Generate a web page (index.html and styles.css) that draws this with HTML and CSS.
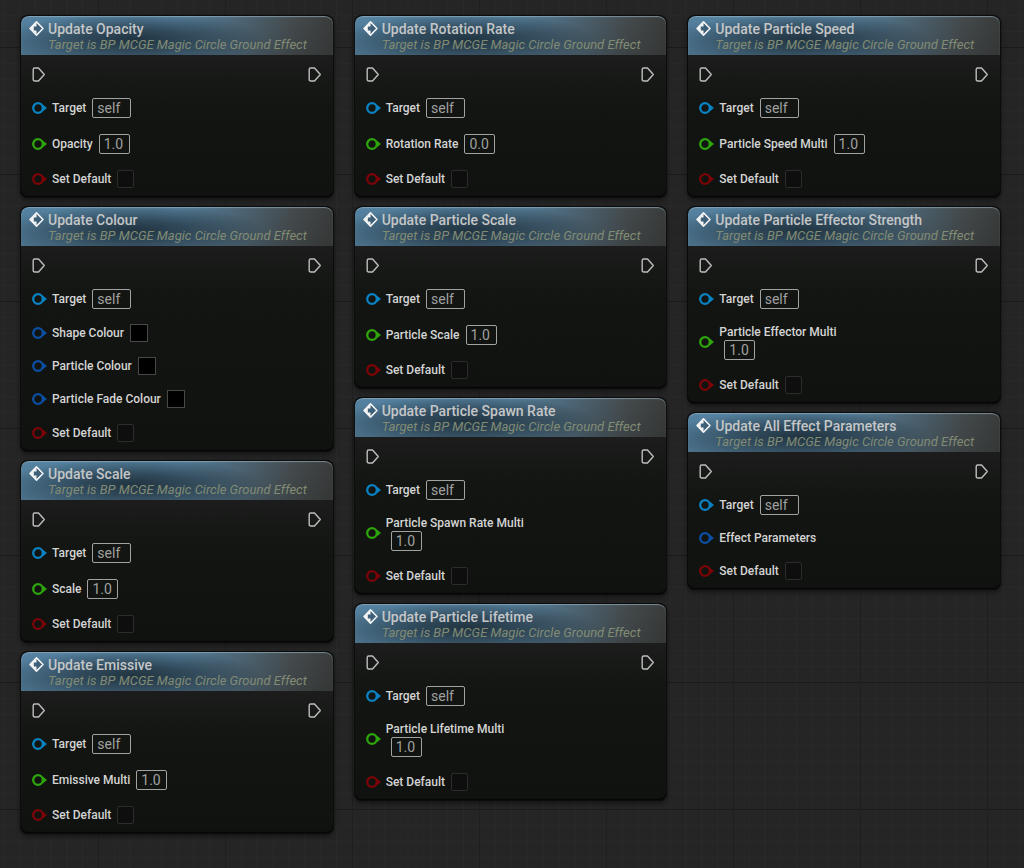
FILE: index.html
```
<!DOCTYPE html>
<html lang="en">
<head>
    <meta charset="UTF-8">
    <meta name="viewport" content="width=device-width, initial-scale=1.0">
    <title>Magic Circle Ground Effect</title>
    <link rel="stylesheet" href="styles.css">
</head>
<body>
    <main class="graph" id="graph"></main>

    <script src="nodes.js"></script>
</body>
</html>
```
FILE: styles.css
```
/* Graph background */
body {
    margin: 0;
    min-height: 100vh;
    font-family: Roboto, "Liberation Sans", sans-serif;
    background-color: #252525;
    background-image:
        linear-gradient(90deg, #1f1f1f 1px, transparent 1px),
        linear-gradient(#1b1b1b 1px, transparent 1px),
        linear-gradient(90deg, #292929 1px, transparent 1px),
        linear-gradient(#292929 1px, transparent 1px);
    background-size: 127px 127px, 127px 127px, calc(127px / 8) calc(127px / 8), calc(127px / 8) calc(127px / 8);
    background-position: 98px 47px;
}

.graph {
    display: grid;
    grid-template-columns: repeat(3, 1fr);
    gap: 20px;
    padding: 15px 23px 15px 20px;
}

.column {
    display: flex;
    flex-direction: column;
    gap: 8px;
}

/* Nodes */
.node {
    border-radius: 8px;
    background: linear-gradient(rgba(27, 28, 27, 0.95) 40px, rgba(17, 20, 17, 0.95) 90px, rgba(14, 17, 14, 0.95));
    box-shadow: inset 0 0 0 1px #0b0c0b, inset 0 -2px 1px #050605, 0 2px 5px rgba(0, 0, 0, 0.5);
}

.node-header {
    display: flex;
    gap: 4px;
    box-sizing: border-box;
    height: 40px;
    margin: 0 1px;
    padding: 5px 8px 0;
    border-top: 1px solid #0b0c0b;
    border-radius: 8px 8px 0 0;
    background:
        radial-gradient(ellipse 130px 26px at 36% 60%, rgba(22, 36, 46, 0.8), rgba(22, 36, 46, 0.55) 40%, rgba(22, 36, 46, 0)),
        linear-gradient(rgba(30, 32, 32, 0), rgba(30, 32, 32, 0.2)),
        linear-gradient(90deg, #5583a2, #557f9b 50%, #4d6676 70%, #444a4c 88%, #3a3c3b);
    box-shadow: inset 0 1px 1px rgba(160, 185, 200, 0.6);
}

.event-icon {
    flex: none;
    width: 15px;
    height: 15px;
}

.node-title {
    margin: 0;
    font-size: 14px;
    font-weight: 500;
    line-height: 16px;
    color: #c4c6c7;
}

.node-subtitle {
    margin: 0;
    font-size: 13px;
    line-height: 16px;
    font-style: italic;
    color: #818b74;
}

.node-body {
    display: flex;
    flex-direction: column;
    gap: 15px;
    padding: 12px 12px 10px;
}

/* Pins */
.exec-row {
    display: flex;
    justify-content: space-between;
    align-items: center;
    height: 15px;
}

.exec-pin {
    width: 14px;
    height: 17px;
}

.pin-row {
    display: flex;
    align-items: center;
    gap: 5px;
    height: 21px;
}

.pin-row.color { height: 18px; }
.pin-row.bool { height: 19px; }
.pin-row.struct { height: 16px; }
.pin-row.wrapped { height: 36px; }

.pin {
    flex: none;
    width: 15px;
    height: 14px;
}

.pin-row.object .pin { color: #0a82c2; }
.pin-row.float .pin { color: #2ea50c; }
.pin-row.color .pin,
.pin-row.struct .pin { color: #0b4fa3; }
.pin-row.bool .pin { color: #7c0408; }

.field {
    display: flex;
    align-items: center;
    gap: 6px;
}

.wrapped .field {
    flex-direction: column;
    align-items: flex-start;
    gap: 0;
}

.field label,
.field span {
    font-size: 12px;
    font-weight: 500;
    line-height: 16px;
    color: #d4d4d4;
}

.field input {
    box-sizing: border-box;
    margin: 0;
}

.field input[type="text"] {
    width: 31px;
    height: 20px;
    padding: 0 4px;
    border: 1px solid #a2a2a2;
    border-radius: 2px;
    background: transparent;
    font-family: inherit;
    font-size: 14px;
    color: #a0a0a0;
}

.object .field input[type="text"] {
    width: 39px;
}

.wrapped .field input[type="text"] {
    margin-left: 5px;
}

.field input[type="checkbox"] {
    appearance: none;
    width: 17px;
    height: 18px;
    border: 1px solid #2c2c2c;
    border-radius: 2px;
    background: #0e0e0e;
}

.field input[type="checkbox"]:checked {
    background: #0a86c8;
}

.field input[type="color"] {
    appearance: none;
    width: 18px;
    height: 18px;
    padding: 0;
    border: 1px solid #484848;
    background: #000;
}

.field input[type="color"]::-webkit-color-swatch-wrapper {
    padding: 0;
}

.field input[type="color"]::-webkit-color-swatch {
    border: none;
}
```
FILE: nodes.js
```
const subtitle = 'Target is BP MCGE Magic Circle Ground Effect';

// pins between Target and Set Default, [type, label, value]
const columns = [
    [
        { title: 'Update Opacity', pins: [['float', 'Opacity', '1.0']] },
        { title: 'Update Colour', pins: [['color', 'Shape Colour', '#000000'], ['color', 'Particle Colour', '#000000'], ['color', 'Particle Fade Colour', '#000000']] },
        { title: 'Update Scale', pins: [['float', 'Scale', '1.0']] },
        { title: 'Update Emissive', pins: [['float', 'Emissive Multi', '1.0']] }
    ],
    [
        { title: 'Update Rotation Rate', pins: [['float', 'Rotation Rate', '0.0']] },
        { title: 'Update Particle Scale', pins: [['float', 'Particle Scale', '1.0']] },
        { title: 'Update Particle Spawn Rate', pins: [['float wrapped', 'Particle Spawn Rate Multi', '1.0']] },
        { title: 'Update Particle Lifetime', pins: [['float wrapped', 'Particle Lifetime Multi', '1.0']] }
    ],
    [
        { title: 'Update Particle Speed', pins: [['float', 'Particle Speed Multi', '1.0']] },
        { title: 'Update Particle Effector Strength', pins: [['float wrapped', 'Particle Effector Multi', '1.0']] },
        { title: 'Update All Effect Parameters', pins: [['struct', 'Effect Parameters']] }
    ]
];

const eventIcon = `<svg class="event-icon" viewBox="0 0 15 15"><path d="M7.5 0.9 14 7.5 7.5 14.1 1 7.5Z" fill="#3d6078" stroke="#f4f4f4" stroke-width="1.5" stroke-linejoin="round"/><path d="M7.5 0.9V5.5H4.8V9.5H7.5V14.1L1 7.5Z" fill="#f4f4f4"/></svg>`;
const execPin = `<svg class="exec-pin" viewBox="0 0 14 17"><path d="M2.7 2H6.5L12.3 8.5 6.5 15H2.7Q1.2 15 1.2 13.5V3.5Q1.2 2 2.7 2Z" fill="none" stroke="#bdbdbd" stroke-width="1.4" stroke-linejoin="round"/></svg>`;
const pinIcon = `<svg class="pin" viewBox="0 0 15 14"><circle cx="6" cy="7" r="4.8" fill="none" stroke="currentColor" stroke-width="2.3"/><path d="M11 3.8 15 7 11 10.2Z" fill="currentColor"/></svg>`;

let count = 0;

function pinRow([type, label, value]) {
    const id = 'pin-' + count++;
    let input = '';

    if (type === 'bool') {
        input = `<input type="checkbox" id="${id}">`;
    } else if (type === 'color') {
        input = `<input type="color" id="${id}" value="${value}">`;
    } else if (value) {
        input = `<input type="text" id="${id}" value="${value}">`;
    }

    const text = input ? `<label for="${id}">${label}</label>` : `<span>${label}</span>`;
    return `<div class="pin-row ${type}">${pinIcon}<div class="field">${text}${input}</div></div>`;
}

function nodeHtml(node) {
    const pins = [['object', 'Target', 'self'], ...node.pins, ['bool', 'Set Default']];

    return `<section class="node">
        <header class="node-header">
            ${eventIcon}
            <div>
                <h2 class="node-title">${node.title}</h2>
                <p class="node-subtitle">${subtitle}</p>
            </div>
        </header>
        <div class="node-body">
            <div class="exec-row">${execPin}${execPin}</div>
            ${pins.map(pinRow).join('')}
        </div>
    </section>`;
}

document.getElementById('graph').innerHTML = columns
    .map(nodes => `<div class="column">${nodes.map(nodeHtml).join('')}</div>`)
    .join('');
```
